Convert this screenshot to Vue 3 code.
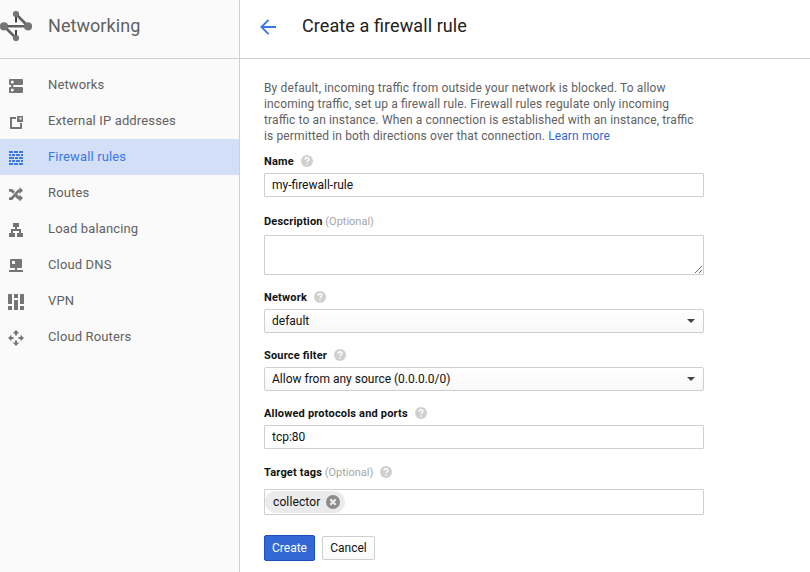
<script setup>
import { ref } from 'vue'

const navItems = [
  { label: 'Networks', icon: 'networks' },
  { label: 'External IP addresses', icon: 'external' },
  { label: 'Firewall rules', icon: 'firewall', active: true },
  { label: 'Routes', icon: 'routes' },
  { label: 'Load balancing', icon: 'balancing' },
  { label: 'Cloud DNS', icon: 'dns' },
  { label: 'VPN', icon: 'vpn' },
  { label: 'Cloud Routers', icon: 'routers' }
]

const icons = {
  networks:
    'M2 1H14Q15 1 15 2V6Q15 7 14 7H5.2V9H14Q15 9 15 10V14Q15 15 14 15H2Q1 15 1 14V10Q1 9 2 9H3V7H2Q1 7 1 6V2Q1 1 2 1ZM4.3 2.6A1.5 1.5 0 1 0 4.3 5.6A1.5 1.5 0 1 0 4.3 2.6ZM4.3 10.5A1.5 1.5 0 1 0 4.3 13.5A1.5 1.5 0 1 0 4.3 10.5Z',
  external: 'M2 3H8V5H4V13H12V9H14V15H2ZM9 2H15V8H9ZM11.5 3.5V5.5H13.5V3.5Z',
  firewall:
    'M1 1H5V3H1ZM6 1H10V3H6ZM11 1H15V3H11ZM1 4H3V6H1ZM4 4H7V6H4ZM8 4H12V6H8ZM13 4H15V6H13ZM1 7H6V9H1ZM7 7H10V9H7ZM11 7H15V9H11ZM1 10H3V12H1ZM4 10H7V12H4ZM8 10H12V12H8ZM13 10H15V12H13ZM1 13H5V15H1ZM6 13H10V15H6ZM11 13H15V15H11Z',
  routes:
    'M1 3H4L7 5.8L5 7.7L3 5.8H1ZM1 14V11.2H3L10 3.4H11.5V1L15 4.6L11.5 8V6.4H10.7L4.2 14ZM9.2 8.2L11 10.4H11.5V8.6L15 12L11.5 15.5V13.6H10L7 10.6Z',
  balancing:
    'M5 1H11V5H9V7H13V11H15V15H9V11H11V9H5V11H7V15H1V11H3V7H7V5H5Z',
  dns: 'M3 1H13Q14 1 14 2V9Q14 10 13 10H9V12H15V14H1V12H7V10H3Q2 10 2 9V2Q2 1 3 1ZM4 3V6H7V3Z',
  vpn: 'M0 0H4V10H0ZM0 12H4V16H0ZM6 0H10V4H6ZM6 6H10V16H6ZM12 0H16V10H12ZM12 12H16V16H12Z',
  routers:
    'M8 0L11.3 3.5H9V5.6H7V3.5H4.7ZM8 16L4.7 12.5H7V10.4H9V12.5H11.3ZM0 8L3.5 4.7V7H5.6V9H3.5V11.3ZM16 8L12.5 11.3V9H10.4V7H12.5V4.7Z'
}

const ruleName = ref('my-firewall-rule')
const description = ref('')
const protocols = ref('tcp:80')
const tags = ref(['collector'])

const selects = [
  { label: 'Network', value: 'default' },
  { label: 'Source filter', value: 'Allow from any source (0.0.0.0/0)' }
]

function removeTag(tag) {
  tags.value = tags.value.filter((t) => t !== tag)
}
</script>

<template>
  <div class="page">
    <aside class="sidebar">
      <header class="brand">
        <svg class="logo" width="32" height="32" viewBox="0 0 32 32">
          <path d="M16 4V12.6M16 20V28" stroke="#424242" stroke-width="2" />
          <path d="M16 4L28 16.3H4L16 28" fill="none" stroke="#616161" stroke-width="2.6" />
          <g fill="#757575">
            <circle cx="16" cy="4" r="3.1" />
            <circle cx="4" cy="16.3" r="4.1" />
            <circle cx="28" cy="16.3" r="4.1" />
            <circle cx="16" cy="28" r="3.1" />
          </g>
        </svg>
        <span>Networking</span>
      </header>
      <nav class="nav">
        <a v-for="item in navItems" :key="item.label" class="nav-item" :class="{ active: item.active }">
          <svg width="16" height="16" viewBox="0 0 16 16">
            <path :d="icons[item.icon]" fill="currentColor" fill-rule="evenodd" />
          </svg>
          <span>{{ item.label }}</span>
        </a>
      </nav>
    </aside>

    <main class="main">
      <header class="title">
        <svg width="16" height="16" viewBox="0 0 16 16">
          <path d="M16 8H1.5M8.6 .8L1.4 8L8.6 15.2" fill="none" stroke="#3b78e7" stroke-width="1.9" />
        </svg>
        <h1>Create a firewall rule</h1>
      </header>

      <form class="form" @submit.prevent>
        <p class="intro">
          By default, incoming traffic from outside your network is blocked. To allow<br />
          incoming traffic, set up a firewall rule. Firewall rules regulate only incoming<br />
          traffic to an instance. When a connection is established with an instance, traffic<br />
          is permitted in both directions over that connection. <a>Learn more</a>
        </p>

        <div class="label label-name">
          <b>Name</b>
          <svg class="help" width="12" height="12" viewBox="0 0 12 12"><circle cx="6" cy="6" r="6" /><path d="M4.1 4.7C4.1 2.1 7.9 2.1 7.9 4.5C7.9 5.8 6 5.8 6 7.3M6 8.4V9.8" /></svg>
        </div>
        <input v-model="ruleName" class="field" type="text" spellcheck="false" />

        <div class="label label-desc"><b>Description</b><span class="optional">(Optional)</span></div>
        <textarea v-model="description" class="field area"></textarea>

        <template v-for="s in selects" :key="s.label">
          <div class="label">
            <b>{{ s.label }}</b>
            <svg class="help" width="12" height="12" viewBox="0 0 12 12"><circle cx="6" cy="6" r="6" /><path d="M4.1 4.7C4.1 2.1 7.9 2.1 7.9 4.5C7.9 5.8 6 5.8 6 7.3M6 8.4V9.8" /></svg>
          </div>
          <div class="field select">
            <span>{{ s.value }}</span>
            <svg width="8" height="4" viewBox="0 0 8 4"><path d="M0 0H8L4 4Z" fill="#444" /></svg>
          </div>
        </template>

        <div class="label">
          <b>Allowed protocols and ports</b>
          <svg class="help" width="12" height="12" viewBox="0 0 12 12"><circle cx="6" cy="6" r="6" /><path d="M4.1 4.7C4.1 2.1 7.9 2.1 7.9 4.5C7.9 5.8 6 5.8 6 7.3M6 8.4V9.8" /></svg>
        </div>
        <input v-model="protocols" class="field" type="text" spellcheck="false" />

        <div class="label label-tags">
          <b>Target tags</b><span class="optional">(Optional)</span>
          <svg class="help" width="12" height="12" viewBox="0 0 12 12"><circle cx="6" cy="6" r="6" /><path d="M4.1 4.7C4.1 2.1 7.9 2.1 7.9 4.5C7.9 5.8 6 5.8 6 7.3M6 8.4V9.8" /></svg>
        </div>
        <div class="field tags">
          <span v-for="tag in tags" :key="tag" class="chip">
            {{ tag }}
            <svg width="14" height="14" viewBox="0 0 14 14" @click="removeTag(tag)">
              <circle cx="7" cy="7" r="7" fill="#8c8c8c" />
              <path d="M4.3 4.3L9.7 9.7M9.7 4.3L4.3 9.7" stroke="#ebebeb" stroke-width="2.2" />
            </svg>
          </span>
        </div>

        <div class="actions">
          <button class="btn primary" type="submit">Create</button>
          <button class="btn" type="button">Cancel</button>
        </div>
      </form>
    </main>
  </div>
</template>

<style>
body {
  overflow: hidden;
  background: #fff;
}
</style>

<style scoped>
.page {
  display: flex;
  height: 572px;
  font-family: Roboto, sans-serif;
  font-size: 12px;
  font-feature-settings: "liga" 1;
  color: #212121;
}
.page * {
  box-sizing: border-box;
}
svg {
  display: block;
  flex: none;
}
.sidebar {
  width: 240px;
  flex: none;
  background: #fafafa;
  border-right: 1px solid #d0d0d0;
}
.brand {
  display: flex;
  align-items: center;
  gap: 16px;
  height: 59px;
  padding-bottom: 6px;
  border-bottom: 1px solid #d0d0d0;
  font-size: 18px;
  letter-spacing: 0.06px;
  color: #616161;
}
.brand span {
  padding-bottom: 2px;
}
.nav {
  padding-top: 8px;
}
.nav-item {
  display: flex;
  align-items: center;
  gap: 24px;
  height: 36px;
  padding-left: 8px;
  font-size: 13px;
  letter-spacing: 0.14px;
  color: #616161;
}
.nav-item span {
  padding-bottom: 2px;
}
.nav-item svg {
  margin-top: 2px;
  color: #757575;
}
.nav-item.active,
.nav-item.active svg {
  color: #3b78e7;
}
.nav-item.active {
  background: #d3dff7;
}
.main {
  flex: 1;
}
.title {
  display: flex;
  align-items: center;
  gap: 26px;
  height: 59px;
  padding: 0 0 6px 20px;
  border-bottom: 1px solid #d0d0d0;
}
.title svg {
  margin-top: 2px;
}
.title h1 {
  margin: 0;
  padding-bottom: 2px;
  font-size: 18px;
  font-weight: 400;
  letter-spacing: 0.09px;
}
.form {
  width: 464px;
  padding: 21px 0 0 24px;
}
.intro {
  margin: 0 0 5px;
  line-height: 16px;
  letter-spacing: 0.125px;
  white-space: nowrap;
  color: #616161;
}
.intro a {
  color: #3367d6;
}
.label {
  display: flex;
  align-items: center;
  height: 24px;
  margin-top: 10px;
  font-size: 11px;
  color: #111;
}
.label b {
  font-weight: 700;
  letter-spacing: 0.19px;
}
.label-name {
  margin-top: 0;
}
.label-desc {
  margin: 12px 0 2px;
}
.label-tags {
  margin: 11px 0 5px;
}
.optional {
  margin-left: 2.6px;
  color: #a6a6a6;
}
.help {
  margin-left: 7px;
  fill: #cfcfcf;
}
.help path {
  fill: none;
  stroke: #fff;
  stroke-width: 1.4;
}
.field {
  display: block;
  width: 440px;
  height: 24px;
  margin: 0;
  padding: 0 7px;
  border: 1px solid #cfcfcf;
  border-radius: 1px;
  outline: none;
  background: #fff;
  font: 12px Roboto, sans-serif;
  color: #111;
}
.area {
  height: 40px;
  resize: both;
}
.select {
  display: flex;
  align-items: center;
  justify-content: space-between;
  padding-right: 8px;
  border-radius: 2px;
  background: linear-gradient(#fff, #f8f8f8);
}
.tags {
  display: flex;
  align-items: center;
  height: 26px;
  padding: 0;
}
.chip {
  display: flex;
  align-items: center;
  justify-content: space-between;
  width: 80px;
  height: 22px;
  padding: 0 5px 0 8px;
  border-radius: 11px;
  background: #ebebeb;
  letter-spacing: 0.12px;
}
.actions {
  display: flex;
  align-items: center;
  gap: 7px;
  margin-top: 20px;
}
.btn {
  width: 53px;
  height: 24px;
  padding: 0;
  border: 1px solid #cfcfcf;
  border-radius: 2px;
  background: linear-gradient(#fff, #fafafa);
  font: 12px Roboto, sans-serif;
  color: #111;
}
.btn.primary {
  width: 51px;
  height: 26px;
  border-color: #1c51c4;
  background: #3367d6;
  color: #fff;
}
</style>
